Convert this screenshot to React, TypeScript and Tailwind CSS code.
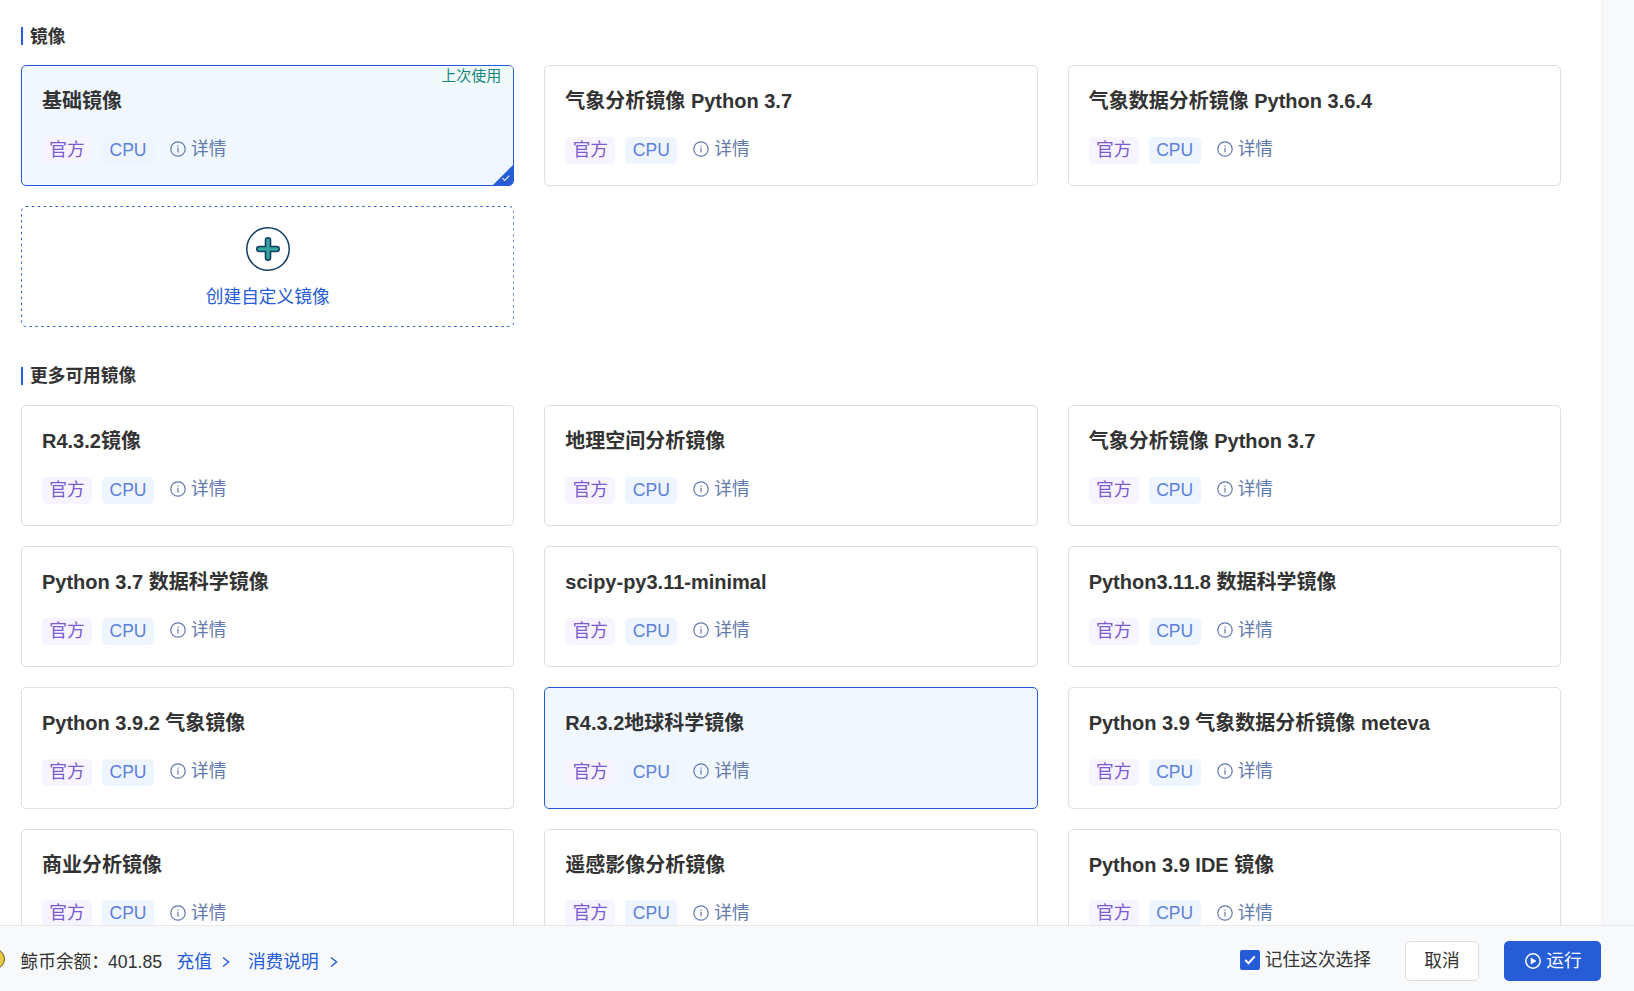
import { clsx } from "clsx";

interface ImageItem {
  name: string;
  active?: boolean;
  selected?: boolean;
  lastUsed?: boolean;
}

const myImages: ImageItem[] = [
  { name: "基础镜像", active: true, selected: true, lastUsed: true },
  { name: "气象分析镜像 Python 3.7" },
  { name: "气象数据分析镜像 Python 3.6.4" },
];

const moreImages: ImageItem[] = [
  { name: "R4.3.2镜像" },
  { name: "地理空间分析镜像" },
  { name: "气象分析镜像 Python 3.7" },
  { name: "Python 3.7 数据科学镜像" },
  { name: "scipy-py3.11-minimal" },
  { name: "Python3.11.8 数据科学镜像" },
  { name: "Python 3.9.2 气象镜像" },
  { name: "R4.3.2地球科学镜像", active: true },
  { name: "Python 3.9 气象数据分析镜像 meteva" },
  { name: "商业分析镜像" },
  { name: "遥感影像分析镜像" },
  { name: "Python 3.9 IDE 镜像" },
];

const InfoIcon = () => (
  <svg className="size-4" viewBox="0 0 16 16" fill="none" stroke="currentColor" strokeWidth="1.2">
    <circle cx="8" cy="8" r="7.2" />
    <path d="M8 6.8v4.8" />
    <path d="M8 4.4v1.3" />
  </svg>
);

const PlusIcon = () => (
  <svg className="size-11" viewBox="0 0 44 44" fill="none" stroke="#123f63">
    <circle cx="22" cy="22" r="21.2" strokeWidth="1.5" />
    <path
      d="M19.5 13.3a2.5 2.5 0 0 1 5 0V19.5h6.2a2.5 2.5 0 0 1 0 5H24.5v6.2a2.5 2.5 0 0 1-5 0V24.5h-6.2a2.5 2.5 0 0 1 0-5H19.5z"
      fill="#34a59d"
      strokeWidth="1.6"
    />
  </svg>
);

const PlayIcon = () => (
  <svg className="size-4" viewBox="0 0 16 16" fill="none" stroke="currentColor" strokeWidth="1.5">
    <circle cx="8" cy="8" r="7.2" />
    <path d="M6 5v6l5-3z" fill="currentColor" strokeWidth="0.6" />
  </svg>
);

const ChevronIcon = ({ className }: { className?: string }) => (
  <svg className={clsx("h-3 w-2", className)} viewBox="0 0 8 12" fill="none" stroke="currentColor" strokeWidth="1.4">
    <path d="M1 1.5 6.6 6 1 10.5" />
  </svg>
);

const SectionTitle = ({ text }: { text: string }) => (
  <h2 className="flex h-[18px] items-center border-l-2 border-[#265cd6] pt-px pl-[7px] text-[17.7px] leading-[18px] font-bold">
    {text}
  </h2>
);

const ImageCard = ({ name, active, selected, lastUsed }: ImageItem) => (
  <div
    className={clsx(
      "relative h-[121.2px] overflow-hidden rounded-[5px] border px-5",
      active ? "border-[#265cd6] bg-[#f0f7ff]" : "border-[#dcdee2] bg-white"
    )}
  >
    {lastUsed && (
      <span className="absolute top-0 right-0 h-5 w-20 rounded-bl-[5px] bg-[#f0faf8] pl-2 text-[15px] leading-[19px] text-[#16857e]">
        上次使用
      </span>
    )}
    <h3 className="mt-5 h-[30px] text-[20px] leading-[30px] font-bold">{name}</h3>
    <div className="mt-[20.8px] flex h-[27px] items-start text-[17.7px] leading-[27.8px]">
      <span className="h-[27px] w-[50px] rounded-[5px] bg-[#f8f4ff] text-center text-[#7a5ad0]">官方</span>
      <span className="ml-2.5 h-[27px] w-[52px] rounded-[5px] bg-[#eef5ff] text-center text-[17.5px] text-[#5c80da]">
        CPU
      </span>
      <span className="-mt-[0.7px] ml-4 flex items-center gap-[5px] text-[#6279ab]">
        <InfoIcon />
        <span className="-mb-0.5">详情</span>
      </span>
    </div>
    {selected && (
      <svg className="absolute right-0 bottom-0 size-5" viewBox="0 0 20 20">
        <path d="M20 0v20H0z" fill="#265cd6" />
        <path d="m9.5 13.2 2.3 2.3 4.4-4.8" fill="none" stroke="#fff" strokeWidth="1.1" />
      </svg>
    )}
  </div>
);

const CreateCard = () => (
  <div className="relative flex h-[121.2px] flex-col items-center pt-[21px] text-[17.7px] text-[#265cd6]">
    {/* sparse dashes, wider gaps than border-dashed gives */}
    <svg className="absolute inset-0 h-[121px] w-full" fill="none" stroke="#265cd6">
      <rect x="0.5" y="0.5" width="492.3" height="120" rx="4.5" strokeDasharray="2.4 3.5" />
    </svg>
    <PlusIcon />
    <span className="mt-[13px] leading-[26px]">创建自定义镜像</span>
  </div>
);

const Footer = () => (
  <footer className="flex h-[66px] shrink-0 items-center border-t border-[#e6e8eb] bg-[#f7f9fb] pt-1 pr-[33px] text-[17.7px]">
    <svg className="mb-1 h-[22px] w-[5px]" viewBox="0 0 5 22">
      <circle cx="-5.5" cy="11" r="10" fill="#e8c842" stroke="#6b5c2c" />
    </svg>
    <span className="mt-1 ml-[15.5px] w-[87.5px] whitespace-nowrap">鲸币余额：</span>
    <span className="mt-1 w-[68.5px]">401.85</span>
    <a className="mt-1 flex items-center text-[#265cd6]">
      充值
      <ChevronIcon className="ml-2.5" />
    </a>
    <a className="mt-1 ml-[18px] flex items-center text-[#265cd6]">
      消费说明
      <ChevronIcon className="ml-[11px]" />
    </a>
    <div className="mb-0.5 ml-auto flex items-center">
      <span className="mt-px flex size-5 items-center justify-center rounded-[2px] bg-[#265cd6]">
        <svg className="size-3" viewBox="0 0 12 12" fill="none" stroke="#fff" strokeWidth="2">
          <path d="m1.3 6 3.2 3.2 6.3-6.8" />
        </svg>
      </span>
      <span className="-mb-0.5 ml-[5px]">记住这次选择</span>
    </div>
    <button className="ml-[34px] h-10 w-[74px] rounded-[5px] border border-[#dcdee2] bg-white pt-0.5">取消</button>
    <button className="ml-[25px] flex h-10 w-[97px] items-center justify-center gap-[5px] rounded-[5px] bg-[#265cd6] pl-0.5 text-white">
      <PlayIcon />
      <span className="mt-0.5">运行</span>
    </button>
  </footer>
);

const App = () => {
  return (
    <div className="flex h-[991px] w-[1634px] flex-col overflow-hidden bg-[#f7f9fb] font-['Liberation_Sans','Noto_Sans_CJK_SC',sans-serif] text-[#333]">
      <main className="min-h-0 w-[1601px] flex-1 overflow-hidden bg-white pt-[27px] pr-10 pl-[21px] shadow-[0_0_8px_rgba(0,0,0,0.03)]">
        <SectionTitle text="镜像" />
        <div className="mt-5 grid grid-cols-3 gap-x-[30px] gap-y-5">
          {myImages.map((item) => (
            <ImageCard key={item.name} {...item} />
          ))}
          <CreateCard />
        </div>
        <div className="mt-[39.6px]">
          <SectionTitle text="更多可用镜像" />
        </div>
        <div className="mt-5 grid grid-cols-3 gap-x-[30px] gap-y-5">
          {moreImages.map((item) => (
            <ImageCard key={item.name} {...item} />
          ))}
        </div>
      </main>
      <Footer />
    </div>
  );
};

export default App;
